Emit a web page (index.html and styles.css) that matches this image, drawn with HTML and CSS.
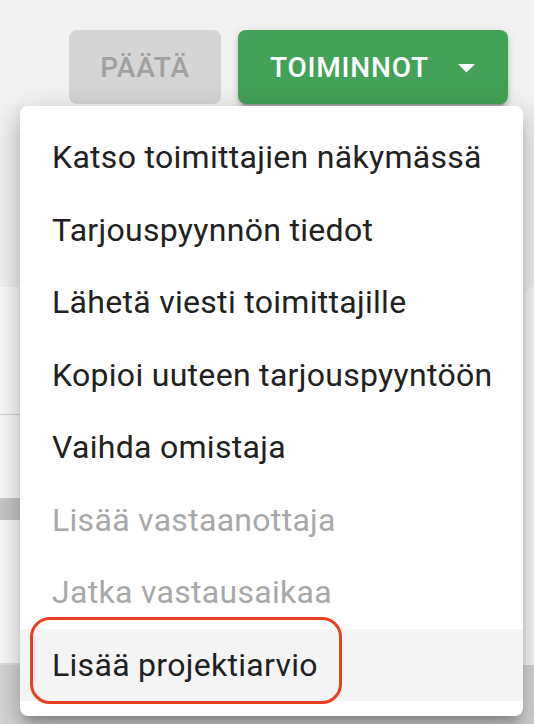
FILE: index.html
```html
<!DOCTYPE html>
<html lang="fi">
<head>
<meta charset="utf-8">
<title>Toiminnot</title>
<link rel="stylesheet" href="styles.css">
</head>
<body>
<div class="page">
  <div class="toolbar">
    <button class="btn btn-disabled" disabled>PÄÄTÄ</button>
    <button class="btn btn-primary">TOIMINNOT
      <svg class="caret" width="17" height="9" viewBox="0 0 17 9"><path d="M0 0h17L8.5 8.5z" fill="#fff"/></svg>
    </button>
  </div>
  <div class="panels">
    <div class="card card-main">
      <div class="card-head"></div>
      <div class="card-body"></div>
      <div class="card-band"></div>
      <div class="card-rest"></div>
    </div>
    <div class="card card-side"></div>
  </div>
  <div class="bottom-area"></div>

  <ul class="menu">
    <li class="menu-item">Katso toimittajien näkymässä</li>
    <li class="menu-item">Tarjouspyynnön tiedot</li>
    <li class="menu-item">Lähetä viesti toimittajille</li>
    <li class="menu-item">Kopioi uuteen tarjouspyyntöön</li>
    <li class="menu-item">Vaihda omistaja</li>
    <li class="menu-item is-disabled">Lisää vastaanottaja</li>
    <li class="menu-item is-disabled">Jatka vastausaikaa</li>
    <li class="menu-item is-hover">Lisää projektiarvio</li>
    <li class="highlight-ring" aria-hidden="true"></li>
  </ul>
</div>
</body>
</html>
```

FILE: styles.css
```css
* { box-sizing: border-box; }

html, body {
  margin: 0;
  padding: 0;
}

body {
  width: 534px;
  height: 724px;
  overflow: hidden;
  background: #f2f2f2;
  font-family: Roboto, "Liberation Sans", sans-serif;
}

.page {
  position: relative;
  width: 534px;
  height: 724px;
  display: flex;
  flex-direction: column;
}

.toolbar {
  display: flex;
  justify-content: flex-end;
  gap: 17px;
  padding: 30px 26px 0 0;
}

.btn {
  height: 74px;
  border: none;
  border-radius: 8px;
  font-family: Roboto, "Liberation Sans", sans-serif;
  font-size: 28px;
  font-weight: 500;
  letter-spacing: 0.8px;
  display: flex;
  align-items: center;
  padding: 0 32px;
}

.btn-disabled {
  width: 152px;
  justify-content: center;
  background: #d5d5d5;
  color: #a0a0a0;
}

.btn-primary {
  width: 270px;
  background: #43a257;
  color: #ffffff;
  box-shadow: 0 6px 2px -4px rgba(0,0,0,0.2), 0 4px 4px 0 rgba(0,0,0,0.14), 0 2px 10px 0 rgba(0,0,0,0.12);
}

.caret {
  margin-left: 29px;
  margin-top: 2px;
}

.panels {
  display: flex;
  gap: 8px;
  margin-top: 183px;
  height: 378px;
}

.card {
  background: #ffffff;
}

.card-main {
  width: 518px;
  display: flex;
  flex-direction: column;
}

.card-side {
  flex: 1;
  border-radius: 8px 0 0 0;
  background: #fafafa;
}

.card-head {
  height: 128px;
  border-bottom: 1px solid #d4d4d4;
  background: #fbfbfb;
}

.card-body {
  height: 83px;
  background: #fbfbfb;
}

.card-band {
  height: 22px;
  background: #c8c8c8;
}

.card-rest {
  flex: 1;
  background: #fbfbfb;
  border-bottom: 2px solid #e0e0e0;
}

.bottom-area {
  flex: 1;
  background: #d6d6d6;
}

.menu {
  position: absolute;
  top: 106px;
  left: 20px;
  width: 503px;
  margin: 0;
  padding: 15px 0 15px;
  list-style: none;
  background: #ffffff;
  border-radius: 8px;
  box-shadow: 0 10px 10px -5px rgba(0,0,0,0.2), 0 16px 24px 2px rgba(0,0,0,0.14), 0 6px 30px 5px rgba(0,0,0,0.12);
}

.menu-item {
  height: 72.5px;
  display: flex;
  align-items: center;
  padding: 0 32px;
  font-size: 32px;
  letter-spacing: 0.3px;
  color: #212121;
  white-space: nowrap;
}

.menu-item.is-disabled {
  color: #a8a8a8;
}

.menu-item.is-hover {
  background: #f4f4f4;
}

.highlight-ring {
  position: absolute;
  left: 10px;
  top: 511px;
  width: 312px;
  height: 87px;
  border: 3.5px solid #e8401e;
  border-radius: 20px;
}
```
